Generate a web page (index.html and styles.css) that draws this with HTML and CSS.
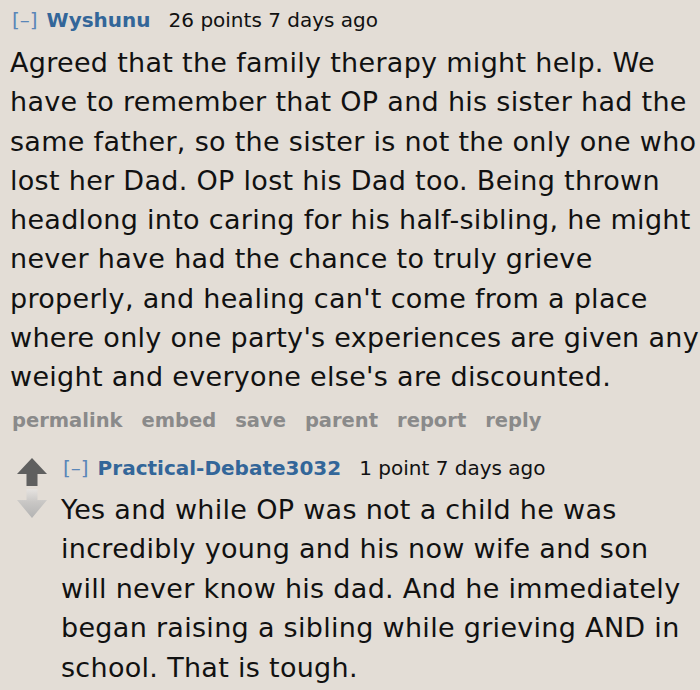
FILE: index.html
```html
<!DOCTYPE html>
<html>
<head>
<meta charset="utf-8">
<link rel="stylesheet" href="styles.css">
</head>
<body>
<div class="comment">
  <div class="tagline"><span class="expand">[–]</span><span class="author">Wyshunu</span><span class="score">26 points</span> <span class="time">7 days ago</span></div>
  <div class="md">Agreed that the family therapy might help. We have to remember that OP and his sister had the same father, so the sister is not the only one who lost her Dad. OP lost his Dad too. Being thrown headlong into caring for his half-sibling, he might never have had the chance to truly grieve properly, and healing can't come from a place where only one party's experiences are given any weight and everyone else's are discounted.</div>
  <ul class="buttons"><li>permalink</li><li>embed</li><li>save</li><li>parent</li><li>report</li><li>reply</li></ul>
  <div class="child">
    <div class="votes">
      <svg class="arrow up" viewBox="0 0 30 28" width="30" height="28"><path d="M15 0 L30 16 L20.5 16 L20.5 28 L9.5 28 L9.5 16 L0 16 Z"/></svg>
      <svg class="arrow down" viewBox="0 0 30 29" width="30" height="29"><defs><linearGradient id="dg" x1="0" y1="0" x2="0" y2="1"><stop offset="0" stop-color="#e6e3e0"/><stop offset="0.45" stop-color="#c9c7c5"/><stop offset="1" stop-color="#b3b3b3"/></linearGradient></defs><path fill="url(#dg)" d="M15 29 L30 11 L20.5 11 L20.5 0 L9.5 0 L9.5 11 L0 11 Z"/></svg>
    </div>
    <div class="entry">
      <div class="tagline"><span class="expand">[–]</span><span class="author">Practical-Debate3032</span><span class="score">1 point</span> <span class="time">7 days ago</span></div>
      <div class="md">Yes and while OP was not a child he was incredibly young and his now wife and son will never know his dad. And he immediately began raising a sibling while grieving AND in school. That is tough.</div>
    </div>
  </div>
</div>
</body>
</html>
```
FILE: styles.css
```css
html, body {
  margin: 0;
  padding: 0;
  background: #e3ddd6;
}
body {
  font-family: "DejaVu Sans", Verdana, sans-serif;
  color: #111;
  overflow: hidden;
}
.comment {
  padding: 6px 0 0 10px;
}
.tagline {
  font-size: 20px;
  line-height: 28px;
  color: #111;
  white-space: nowrap;
}
.expand {
  color: #5a86b8;
  margin-left: 2px;
  margin-right: 9px;
}
.author {
  color: #336699;
  font-weight: bold;
  margin-right: 18px;
}
.md {
  font-size: 27px;
  letter-spacing: 0.3px;
  line-height: 39.3px;
  margin-top: 9px;
}
.buttons {
  list-style: none;
  margin: 12px 0 0 2px;
  padding: 0;
  display: flex;
  gap: 19px;
  font-size: 19.5px;
  font-weight: bold;
  color: #8a8a8a;
  line-height: 24px;
}
.child {
  display: flex;
  margin-top: 21px;
  margin-left: 7px;
}
.votes {
  display: flex;
  flex-direction: column;
  gap: 3px;
  flex: 0 0 44px;
  padding-top: 4px;
}
.votes svg { display: block; }
.arrow.up { fill: #5f5f5f; }
.entry {
  flex: 1 1 auto;
  min-width: 0;
}
.entry .tagline .expand {
  margin-left: 2px;
}
.entry .md {
  margin-top: 8px;
  line-height: 39.5px;
}
```
